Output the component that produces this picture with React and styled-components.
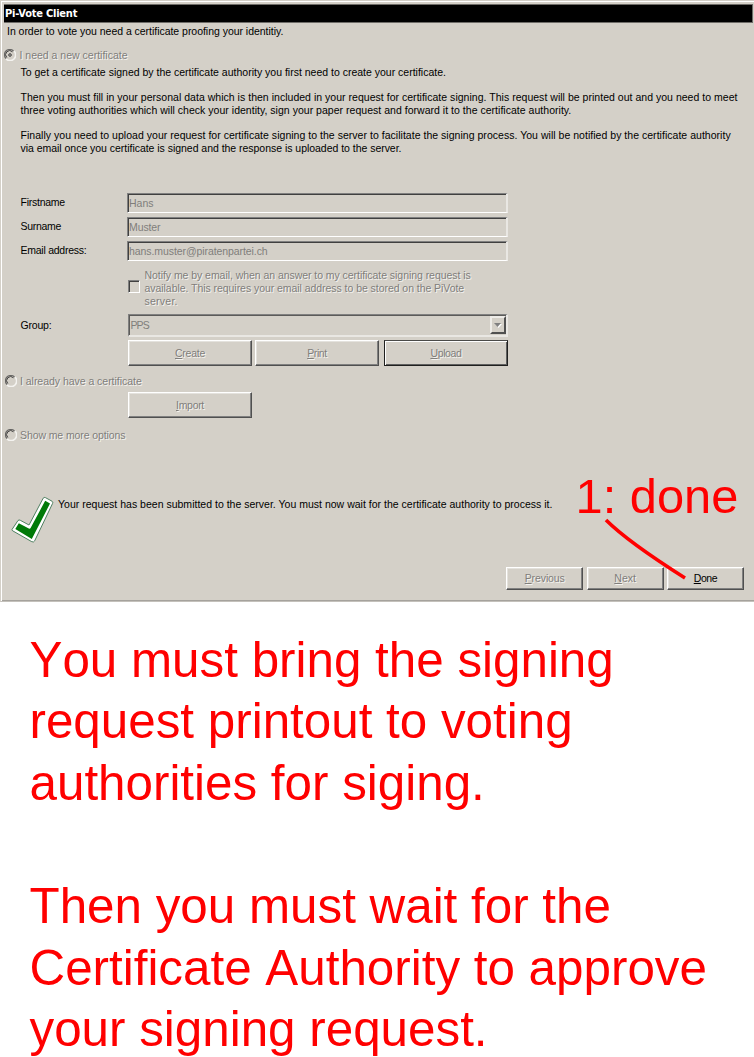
import React from "react";
import styled, { createGlobalStyle, css } from "styled-components";

const Global = createGlobalStyle`
  * { box-sizing: border-box; }
  html, body { margin: 0; padding: 0; background: #fff; overflow: hidden; }
`;

const Page = styled.main`
  width: 754px;
  height: 1057px;
  overflow: hidden;
  background: #fff;
`;

const Window = styled.section`
  position: relative;
  height: 602px;
  padding: 3px 1px 0 3px;
  display: flex;
  flex-direction: column;
  background: #d4d0c8;
  border: 1px solid #d4d0c8;
  border-right: 0;
  border-bottom: 1px solid #c4c1bb;
  box-shadow: inset 1px 1px 0 #fff, inset 0 -1px 0 #a5a29c;
  font: 10.5px/13px "Liberation Sans", Arial, sans-serif;
  color: #000;
`;

const TitleBar = styled.header`
  height: 19px;
  flex: none;
  padding-left: 1px;
  background: #000;
  border: 1px solid #6e6c68;
  border-left: 0;
  color: #fff;
  font: bold 11px/18px "DejaVu Sans Condensed", "DejaVu Sans", sans-serif;
  letter-spacing: -0.22px;
`;

const Line = styled.span`
  display: block;
  height: 13px;
  white-space: nowrap;
  letter-spacing: ${(p) => p.$track || 0}px;
  ${(p) =>
    p.$muted &&
    css`
      color: #807e7b;
      text-shadow: 1px 1px 0 #f4f3f0;
    `}
`;

const Intro = styled.div`
  margin: 2px 0 0 3px;
`;

const Option = styled.label`
  display: flex;
  align-items: center;
  height: 14px;
  gap: 3.5px;
  margin-top: ${(p) => p.$top}px;
  padding-left: ${(p) => p.$indent}px;
`;

const Body = styled.div`
  display: flex;
  flex-direction: column;
  gap: 12px;
  margin: 4px 0 0 16.5px;
`;

const Form = styled.div`
  display: grid;
  grid-template-columns: 106.5px 380.5px;
  margin: 38px 0 0 16.5px;
`;

const Label = styled.div`
  padding-top: ${(p) => p.$top ?? 3}px;
`;

const Field = styled.div`
  height: 20px;
  margin-bottom: 4px;
  padding: 3px 0 0 1px;
  border: 1px solid #808080;
  border-right: 2px solid #e9e7e3;
  border-bottom-color: #fff;
  box-shadow: inset 1px 1px 0 #404040;
  color: #807e7b;
`;

const Consent = styled.label`
  display: flex;
  align-items: center;
  height: 39px;
  margin: 4px 0 0 1px;
  gap: 4.5px;
`;

const CheckBox = styled.i`
  width: 12px;
  height: 13px;
  margin-bottom: 4px;
  border: 1px solid #808080;
  border-right-color: #fff;
  border-bottom-color: #fff;
  box-shadow: inset 1px 1px 0 #404040;
`;

const Combo = styled.div`
  display: flex;
  justify-content: space-between;
  height: 23px;
  margin: 6px 0 0 0.5px;
  padding: 1px 0 1px 2px;
  border: 1px solid #808080;
  border-right: 2px solid #e9e7e3;
  border-bottom: 2px solid #e9e7e3;
  box-shadow: inset 1px 1px 0 #5c5b59;
  color: #807e7b;
  line-height: 18px;
`;

const DropButton = styled.span`
  display: flex;
  align-items: center;
  justify-content: center;
  width: 16px;
  height: 18px;
  border: 2px solid;
  border-color: #eeece8 #505050 #505050 #eeece8;
`;

const RequestActions = styled.div`
  display: grid;
  grid-template-columns: 127px 129px 124px;
  margin: 3px 0 0 124px;
`;

const ImportAction = styled.div`
  margin: 4px 0 0 124px;
`;

const Wizard = styled.nav`
  display: flex;
  justify-content: flex-end;
  gap: 3.4px;
  margin: 23px 9px 0 0;
`;

const Button = styled.button`
  width: ${(p) => p.$w || 124}px;
  height: ${(p) => p.$h || 26}px;
  flex: none;
  display: flex;
  align-items: center;
  justify-content: center;
  padding: 0;
  background: #d4d0c8;
  border: 1px solid;
  border-color: #fff #505050 #505050 #fff;
  box-shadow: inset -1px -1px 0 #808080, inset 1px 1px 0 #e4e2dd;
  color: #000;
  font: inherit;
  ${(p) =>
    p.$focus &&
    css`
      border-color: #4a4a48 #20201f #20201f #20201f;
      box-shadow: inset 1px 1px 0 #fff, inset -1px -1px 0 #606060;
    `}
`;

const Status = styled.div`
  display: flex;
  gap: 4px;
  margin: 54px 0 0 7px;
`;

const StatusText = styled.div`
  padding-top: 2px;
`;

const CalloutLabel = styled.div`
  position: absolute;
  left: 574.5px;
  top: 466px;
  color: #f00;
  font: 48.8px/58px "Liberation Sans", Arial, sans-serif;
  white-space: nowrap;
`;

const Pointer = styled.svg`
  position: absolute;
  left: 599px;
  top: 513px;
`;

const Notes = styled.section`
  padding: 26.5px 0 0 29.5px;
  color: #f00;
  font: 49.35px/61.65px "Liberation Sans", Arial, sans-serif;
  font-kerning: none;
  white-space: nowrap;
`;

const NoteLine = styled.div`
  height: 61.65px;
`;

function Radio({ checked }) {
  return (
    <svg width="12" height="12" viewBox="0 0 12 12" fill="none">
      <path d="M2 10A5 5 0 0 0 10 2" stroke="#f4f3f0" strokeWidth="1.6" />
      <path d="M2 9.5A5 5 0 0 1 9.5 2" stroke="#6a6967" strokeWidth="1.2" />
      <path d="M2.8 8.5A4 4 0 0 1 8.5 2.8" stroke="#403f3e" strokeWidth="1" />
      {checked && <path d="M6 4v4M4 6h4" stroke="#777572" strokeWidth="2" />}
    </svg>
  );
}

function CheckMark() {
  return (
    <svg width="43" height="48" viewBox="0 0 43 48">
      <path
        d="M1 33.5L7 24.5Q8 23.5 9.3 24.3L18 29L32.2 2.2Q33 1 34.4 1.6L41 5.2Q42.3 6 41.6 7.4L23.7 44.8Q22.7 46.6 20.8 45.7L2 35Q.7 34.3 1 33.5Z"
        fill="#fff"
        stroke="#4f8061"
        strokeWidth="1"
      />
      <path d="M4.3 33L7.8 27.3L17.8 32.5Q19 33 19.6 31.9L34.2 4.8L39 7.6L20.8 43Z" fill="#007a08" />
    </svg>
  );
}

function Action({ text, track, muted, ...rest }) {
  return (
    <Button {...rest}>
      <Line $muted={muted} $track={track}>
        <u>{text[0]}</u>
        {text.slice(1)}
      </Line>
    </Button>
  );
}

export default function App() {
  return (
    <Page>
      <Global />
      <Window>
        <TitleBar>Pi-Vote Client</TitleBar>
        <Intro>
          <Line $track={-0.03}>In order to vote you need a certificate proofing your identitiy.</Line>
        </Intro>

        <Option $top={10} $indent={0}>
          <Radio checked />
          <Line $muted>I need a new certificate</Line>
        </Option>
        <Body>
          <Line>To get a certificate signed by the certificate authority you first need to create your certificate.</Line>
          <div>
            <Line $track={0.025}>
              Then you must fill in your personal data which is then included in your request for certificate signing. This request will be printed out and you need to meet
            </Line>
            <Line $track={0.025}>
              three voting authorities which will check your identity, sign your paper request and forward it to the certificate authority.
            </Line>
          </div>
          <div>
            <Line $track={0.028}>
              Finally you need to upload your request for certificate signing to the server to facilitate the signing process. You will be notified by the certificate authority
            </Line>
            <Line $track={-0.03}>via email once you certificate is signed and the response is uploaded to the server.</Line>
          </div>
        </Body>

        <Form>
          <Label><Line $track={-0.25}>Firstname</Line></Label>
          <Field><Line>Hans</Line></Field>
          <Label><Line $track={-0.3}>Surname</Line></Label>
          <Field><Line $track={-0.1}>Muster</Line></Field>
          <Label><Line $track={-0.25}>Email address:</Line></Label>
          <Field><Line $track={-0.08}>hans.muster@piratenpartei.ch</Line></Field>
          <span />
          <Consent>
            <CheckBox />
            <div>
              <Line $muted $track={-0.05}>Notify me by email, when an answer to my certificate signing request is</Line>
              <Line $muted $track={-0.05}>available. This requires your email address to be stored on the PiVote</Line>
              <Line $muted $track={0.25}>server.</Line>
            </div>
          </Consent>
          <Label $top={11}><Line $track={-0.2}>Group:</Line></Label>
          <Combo>
            <Line $track={-0.9}>PPS</Line>
            <DropButton>
              <svg width="8" height="5" viewBox="0 0 8 5">
                <path d="M1 1h7L4.5 5z" fill="#fff" />
                <path d="M0 0h7L3.5 4z" fill="#808080" />
              </svg>
            </DropButton>
          </Combo>
        </Form>

        <RequestActions>
          <Action text="Create" track={-0.25} muted />
          <Action text="Print" track={-0.4} muted />
          <Action text="Upload" track={-0.35} muted $focus />
        </RequestActions>
        <Option $top={8} $indent={0.5}>
          <Radio />
          <Line $muted $track={-0.03}>I already have a certificate</Line>
        </Option>
        <ImportAction>
          <Action text="Import" track={-0.3} muted />
        </ImportAction>
        <Option $top={10} $indent={0.5}>
          <Radio />
          <Line $muted $track={-0.1}>Show me more options</Line>
        </Option>

        <Status>
          <CheckMark />
          <StatusText>
            <Line $track={0.01}>Your request has been submitted to the server. You must now wait for the certificate authority to process it.</Line>
          </StatusText>
        </Status>
        <Wizard>
          <Action text="Previous" track={-0.1} muted $w={77} $h={23} />
          <Action text="Next" muted $w={77} $h={23} />
          <Action text="Done" track={-0.4} $w={77} $h={23} />
        </Wizard>

        <CalloutLabel>1: done</CalloutLabel>
        <Pointer width="92" height="72" viewBox="0 0 92 72" fill="none">
          <path d="M6 6C24 24 55 45 85 64" stroke="#f00" strokeWidth="3.6" />
        </Pointer>
      </Window>
      <Notes>
        <NoteLine>You must bring the signing</NoteLine>
        <NoteLine>request printout to voting</NoteLine>
        <NoteLine>authorities for siging.</NoteLine>
        <NoteLine />
        <NoteLine>Then you must wait for the</NoteLine>
        <NoteLine>Certificate Authority to approve</NoteLine>
        <NoteLine>your signing request.</NoteLine>
      </Notes>
    </Page>
  );
}
